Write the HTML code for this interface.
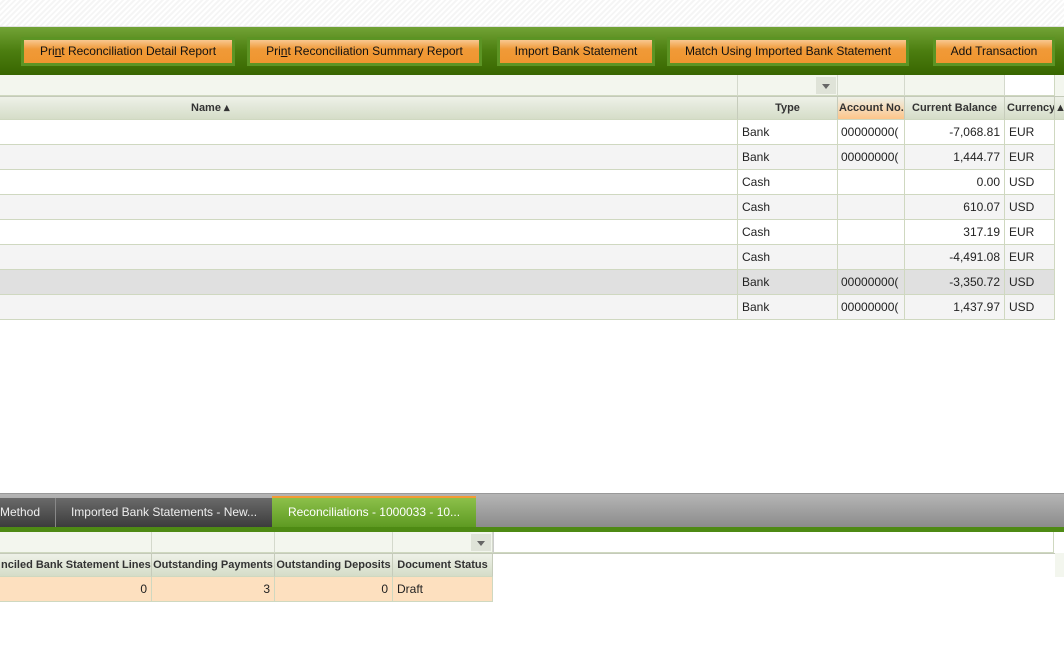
<!DOCTYPE html>
<html><head><meta charset="utf-8"><style>
*{box-sizing:border-box;margin:0;padding:0}
body{width:1064px;height:669px;overflow:hidden;background:#fff;font-family:"Liberation Sans",sans-serif;font-size:12px;color:#222;position:relative}
.a{position:absolute}
.top{left:0;top:0;width:1064px;height:27px;background:repeating-linear-gradient(135deg,#fff 0 2px,#f5f5f5 2px 4px);border-bottom:1px solid #e2e2e2}
.tb{left:0;top:27px;width:1064px;height:48px;background:linear-gradient(#72a336,#4c7e10 50%,#386600)}
.btn{top:37px;height:29px;background:linear-gradient(#f8c890,#f09a38 40%,#ef952f);border:3px solid #5c9424;font-size:12px;color:#111;text-align:center;line-height:23px}
.c{position:absolute;border-right:1px solid #cfd8c0;border-bottom:1px solid #cfd8c0;padding:0 4px;white-space:nowrap;overflow:hidden;line-height:24px;font-size:12px}
.f{background:#f3f6ee;height:21px;border-right:1px solid #d4d9cc}
.h{background:linear-gradient(#eef1e8,#d5ddc8);font-weight:bold;font-size:11px;color:#333;text-align:center;height:24px;line-height:23px;border-top:1px solid #c4cab9;border-right:1px solid #c6ccbb}
.r{text-align:right}
.dd{position:absolute;width:20px;height:17px;background:#dfe3d8;top:2px;right:1px}
.dd:after{content:"";position:absolute;left:6px;top:7px;border-left:4px solid transparent;border-right:4px solid transparent;border-top:5px solid #666}
</style></head><body>
<div class="a top"></div>
<div class="a tb"></div>
<div class="a btn" style="left:21px;width:214px">Pri<u>n</u>t Reconciliation Detail Report</div>
<div class="a btn" style="left:247px;width:235px">Pri<u>n</u>t Reconciliation Summary Report</div>
<div class="a btn" style="left:497px;width:158px">Import Bank Statement</div>
<div class="a btn" style="left:667px;width:242px">Match Using Imported Bank Statement</div>
<div class="a btn" style="left:933px;width:122px">Add Transaction</div>

<div class="c f" style="left:0;top:75px;width:738px"></div>
<div class="c f" style="left:738px;top:75px;width:100px"><div class="dd"></div></div>
<div class="c f" style="left:838px;top:75px;width:67px"></div>
<div class="c f" style="left:905px;top:75px;width:100px"></div>
<div class="c" style="left:1005px;top:75px;width:50px;height:21px;background:#fff"></div>
<div class="a" style="left:1055px;top:75px;width:9px;height:21px;background:#f3f6ee"></div>

<div class="c h" style="left:0;top:96px;width:738px;text-align:left;padding-left:191px">Name ▴</div>
<div class="c h" style="left:738px;top:96px;width:100px">Type</div>
<div class="c h" style="left:838px;top:96px;width:67px;background:linear-gradient(#eef1e8,#fdc58a);text-align:left;padding:0 1px">Account No.</div>
<div class="c h" style="left:905px;top:96px;width:100px">Current Balance</div>
<div class="c h" style="left:1005px;top:96px;width:50px;text-align:left;padding:0 2px">Currency</div>
<div class="c h" style="left:1055px;top:96px;width:9px;padding:0;border-right:0">▲</div>

<div id="rows"></div>
<script>
var d=[["Bank","00000000(","-7,068.81","EUR","#fff"],["Bank","00000000(","1,444.77","EUR","#f4f4f4"],["Cash","","0.00","USD","#fff"],["Cash","","610.07","USD","#f4f4f4"],["Cash","","317.19","EUR","#fff"],["Cash","","-4,491.08","EUR","#f4f4f4"],["Bank","00000000(","-3,350.72","USD","#e0e0e0"],["Bank","00000000(","1,437.97","USD","#f4f4f4"]];
var h="";d.forEach(function(r,i){var t=120+i*25,b="background:"+r[4]+";height:25px;top:"+t+"px;";
h+='<div class="c" style="'+b+'left:0;width:738px"></div><div class="c" style="'+b+'left:738px;width:100px">'+r[0]+'</div><div class="c" style="'+b+'left:838px;width:67px;padding:0 3px">'+r[1]+'</div><div class="c r" style="'+b+'left:905px;width:100px">'+r[2]+'</div><div class="c" style="'+b+'left:1005px;width:50px">'+r[3]+'</div>';});
document.getElementById("rows").innerHTML=h;
</script>

<div class="a" style="left:0;top:493px;width:1064px;height:35px;background:linear-gradient(#b5b5b5,#8a8a8a);border-top:1px solid #999"></div>
<div class="a" style="left:0;top:498px;width:56px;height:29px;background:linear-gradient(#6a6a6a,#3c3c3c);color:#eee;line-height:29px;font-size:12px;border-right:1px solid #888">Method</div>
<div class="a" style="left:56px;top:498px;width:216px;height:29px;background:linear-gradient(#6a6a6a,#3c3c3c);color:#eee;line-height:29px;font-size:12px;text-align:center">Imported Bank Statements - New...</div>
<div class="a" style="left:272px;top:496px;width:204px;height:31px;background:linear-gradient(#8cc04a,#5e9a22);border-top:2px solid #f39a35;color:#fff;line-height:29px;font-size:12px;text-align:center">Reconciliations - 1000033 - 10...</div>
<div class="a" style="left:0;top:527px;width:1064px;height:5px;background:#4e8a14"></div>

<div class="c f" style="left:0;top:532px;width:152px"></div>
<div class="c f" style="left:152px;top:532px;width:123px"></div>
<div class="c f" style="left:275px;top:532px;width:118px"></div>
<div class="c f" style="left:393px;top:532px;width:100px"><div class="dd"></div></div>
<div class="c" style="left:493px;top:532px;width:561px;height:21px;border-left:1px solid #ccc"></div>
<div class="c h" style="left:0;top:553px;width:152px;text-align:right;padding:0 1px">nciled Bank Statement Lines</div>
<div class="c h" style="left:152px;top:553px;width:123px;padding:0">Outstanding Payments</div>
<div class="c h" style="left:275px;top:553px;width:118px;padding:0">Outstanding Deposits</div>
<div class="c h" style="left:393px;top:553px;width:100px;padding:0">Document Status</div>
<div class="a" style="left:493px;top:553px;width:571px;height:24px;border-top:1px solid #c4cab9"></div>
<div class="a" style="left:1055px;top:553px;width:9px;height:24px;background:#f3f6ee"></div>
<div class="c r" style="left:0;top:577px;width:152px;height:25px;background:#fde0bf">0</div>
<div class="c r" style="left:152px;top:577px;width:123px;height:25px;background:#fde0bf">3</div>
<div class="c r" style="left:275px;top:577px;width:118px;height:25px;background:#fde0bf">0</div>
<div class="c" style="left:393px;top:577px;width:100px;height:25px;background:#fde0bf">Draft</div>
</body></html>
